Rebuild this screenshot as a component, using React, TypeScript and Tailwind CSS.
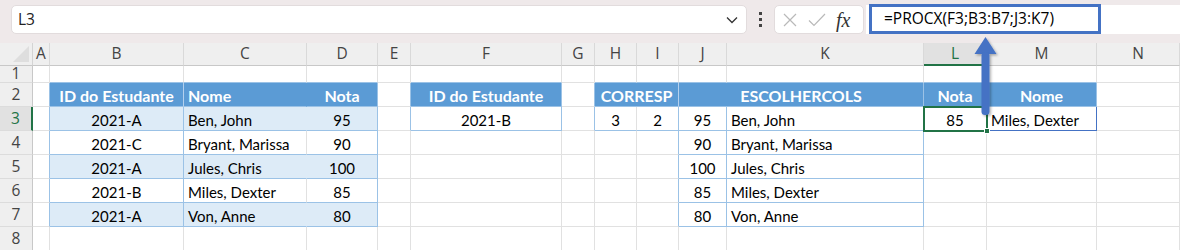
import { Fragment } from 'react'

type Spec = {
  t?: string
  al?: 'l' | 'c'
  kind?: 'head' | 'band' | 'plain'
  r?: string
  b?: string
  span?: boolean
}

// border colour classes (written out in full so tailwind picks them up)
const rG = 'border-r-[#e1e1e1]'
const rT = 'border-r-[#9bc2e6]'
const rH = 'border-r-[#5b9bd5]'
const rW = 'border-r-[#b4d0ee]'
const rB = 'border-r-[#ddebf7]'
const rM = 'border-r-[#4472c4]'
const bG = 'border-b-[#e1e1e1]'
const bT = 'border-b-[#9bc2e6]'
const bM = 'border-b-[#4472c4]'

const COLS = ['A', 'B', 'C', 'D', 'E', 'F', 'G', 'H', 'I', 'J', 'K', 'L', 'M', 'N']

const x: Spec = {}

const ROWS: { n: number; h: string; cells: Spec[] }[] = [
  {
    n: 1,
    h: 'h-[17px]',
    cells: [x, { b: bT }, { b: bT }, { b: bT }, x, { b: bT }, x, { b: bT }, { b: bT }, { b: bT }, { b: bT }, { b: bT }, { b: bT }, x],
  },
  {
    n: 2,
    h: 'h-[24px]',
    cells: [
      { r: rT },
      { t: 'ID do Estudante', al: 'c', kind: 'head', r: rW, b: bT },
      { t: 'Nome', al: 'l', kind: 'head', r: rH, b: bT },
      { t: 'Nota', al: 'c', kind: 'head', r: rT, b: bT },
      { r: rT },
      { t: 'ID do Estudante', al: 'c', kind: 'head', r: rT, b: bT },
      { r: rT },
      { t: 'CORRESP', al: 'c', kind: 'head', r: rW, b: bT, span: true },
      { t: 'ESCOLHERCOLS', al: 'c', kind: 'head', r: rT, b: bT, span: true },
      { t: 'Nota', al: 'c', kind: 'head', r: rT, b: bT },
      { t: 'Nome', al: 'c', kind: 'head', r: rT, b: bT },
      x,
    ],
  },
]

const students = [
  ['2021-A', 'Ben, John', '95'],
  ['2021-C', 'Bryant, Marissa', '90'],
  ['2021-A', 'Jules, Chris', '100'],
  ['2021-B', 'Miles, Dexter', '85'],
  ['2021-A', 'Von, Anne', '80'],
]

students.forEach(([id, nome, nota], i) => {
  const band = i % 2 === 0
  const kind = band ? 'band' : 'plain'
  const cells: Spec[] = [
    { r: rT },
    { t: id, al: 'c', kind, r: rT, b: bT },
    { t: nome, al: 'l', kind, r: band ? rB : rG, b: bT },
    { t: nota, al: 'c', kind, r: rT, b: bT },
  ]
  if (i === 0) {
    cells.push(
      { r: rT },
      { t: '2021-B', al: 'c', r: rT, b: bT },
      { r: rT },
      { t: '3', al: 'c', r: rG, b: bT },
      { t: '2', al: 'c', r: rT, b: bT },
      { t: nota, al: 'c', r: rT, b: bT },
      { t: nome, al: 'l', r: rT, b: bT },
      { t: '85', al: 'c', r: rT, b: bT },
      { t: 'Miles, Dexter', al: 'l', r: rM, b: bM },
      x,
    )
  } else {
    cells.push(
      x,
      x,
      x,
      x,
      { r: rT },
      { t: nota, al: 'c', r: rT, b: bT },
      { t: nome, al: 'l', r: rT, b: bT },
      x,
      x,
      x,
    )
  }
  ROWS.push({ n: i + 3, h: 'h-[24px]', cells })
})

ROWS.push({ n: 8, h: 'h-[24px]', cells: COLS.map(() => x) })

function Cell({ s, h }: { s: Spec; h: string }) {
  const bg =
    s.kind === 'head'
      ? 'bg-[#5b9bd5] text-white font-bold text-[16px]'
      : s.kind === 'band'
        ? 'bg-[#ddebf7] text-black text-[15px]'
        : 'bg-white text-black text-[15px]'
  return (
    <div
      className={`flex ${h} items-center border-r border-b pt-[2px] leading-[18px] whitespace-nowrap overflow-hidden ${bg} ${
        s.r ?? rG
      } ${s.b ?? bG} ${s.al === 'l' ? 'justify-start pl-[4px]' : 'justify-center'} ${s.span ? 'col-span-2' : ''}`}
      style={{ fontFamily: 'Lato, sans-serif' }}
    >
      {s.t}
    </div>
  )
}

function FormulaBar() {
  return (
    <div className="flex h-[43px] items-start bg-[#efe9ea] pt-[5px] pl-[11px]" style={{ fontFamily: '"Open Sans", sans-serif' }}>
      <div className="flex h-[29px] w-[736px] items-center justify-between rounded-[5px] border border-[#e2dcdd] bg-white pl-[6px] pr-[8px] text-[15.5px] text-[#222]">
        <span>L3</span>
        <svg width="12" height="8" viewBox="0 0 12 8" fill="none" stroke="#333" strokeWidth="1.3">
          <path d="M1 1.5 L6 6.5 L11 1.5" />
        </svg>
      </div>
      <div className="flex h-[29px] w-[27px] flex-col items-center justify-center gap-[3px]">
        <span className="h-[3px] w-[3px] bg-[#444]" />
        <span className="h-[3px] w-[3px] bg-[#444]" />
        <span className="h-[3px] w-[3px] bg-[#444]" />
      </div>
      <div className="flex h-[29px] w-[90px] items-center rounded-[5px] border border-[#e2dcdd] bg-white pl-[7px]">
        <svg width="16" height="16" viewBox="0 0 16 16" fill="none" stroke="#b9b9b9" strokeWidth="1.2">
          <path d="M2 2 L14 14 M14 2 L2 14" />
        </svg>
        <svg className="ml-[10px]" width="18" height="16" viewBox="0 0 18 16" fill="none" stroke="#b9b9b9" strokeWidth="1.2">
          <path d="M1 8.5 L6 13.5 L17 2" />
        </svg>
        <span className="ml-[10px] text-[20px] leading-none text-[#333] italic" style={{ fontFamily: '"Liberation Serif", serif' }}>
          fx
        </span>
      </div>
      <div className="ml-[2px] flex h-[29px] flex-1 bg-white">
        <div className="ml-[3px] -mt-[1px] flex h-[30px] w-[232px] items-center border-[3px] border-[#4472c4] pl-[12px] text-[15.5px] text-black">
          =PROCX(F3;B3:B7;J3:K7)
        </div>
      </div>
    </div>
  )
}

export default function App() {
  return (
    <div className="relative h-[250px] w-[1180px] overflow-hidden bg-white">
      <FormulaBar />
      <div className="grid grid-cols-[33px_17px_134px_123px_71px_33px_151px_33px_42px_42px_48px_197px_63px_110px_1fr]">
        {/* column headers */}
        <div className="relative h-[23px] border-r border-b border-r-[#d4d4d4] border-b-[#c8c8c8] bg-[#efefef]">
          <svg className="absolute right-[3px] bottom-[3px]" width="16" height="16" viewBox="0 0 16 16">
            <polygon points="16,0 16,16 0,16" fill="#dedede" />
          </svg>
        </div>
        {COLS.map(c => (
          <div
            key={c}
            className={`flex h-[23px] items-center justify-center border-r text-[15.5px] ${
              c === 'L'
                ? 'border-b-2 border-b-[#217346] bg-[#e1e1e1] text-[#217346]'
                : 'border-b border-b-[#c8c8c8] bg-[#efefef] text-[#444]'
            } border-r-[#d9d9d9]`}
            style={{ fontFamily: '"Open Sans", sans-serif' }}
          >
            {c}
          </div>
        ))}

        {ROWS.map(row => (
          <Fragment key={row.n}>
            <div
              className={`flex ${row.h} items-center justify-center border-b text-[15.5px] border-b-[#dcdcdc] ${
                row.n === 3
                  ? 'border-r-2 border-r-[#217346] bg-[#e1e1e1] text-[#217346]'
                  : 'border-r border-r-[#c8c8c8] bg-[#efefef] text-[#444]'
              }`}
              style={{ fontFamily: '"Open Sans", sans-serif' }}
            >
              {row.n}
            </div>
            {row.cells.map((s, i) => (
              <Cell key={i} s={s} h={row.h} />
            ))}
          </Fragment>
        ))}
      </div>

      {/* selected cell L3 */}
      <div className="absolute top-[106px] left-[923px] h-[26px] w-[65px] border-2 border-[#217346]" />
      <div className="absolute top-[128px] left-[984px] h-[6px] w-[6px] border border-white bg-[#217346]" />

      {/* annotation arrow */}
      <svg className="absolute top-[30px] left-[968px]" width="40" height="92" viewBox="0 0 40 92">
        <defs>
          <filter id="sh" x="-50%" y="-20%" width="200%" height="140%">
            <feDropShadow dx="1.5" dy="1.5" stdDeviation="1.2" floodColor="#000" floodOpacity="0.3" />
          </filter>
        </defs>
        <g filter="url(#sh)">
          <polygon points="17.5,7 6.5,24 28.5,24" fill="#4472c4" />
          <rect x="13.5" y="22" width="8" height="63" rx="3.5" fill="#4472c4" />
        </g>
      </svg>
    </div>
  )
}
